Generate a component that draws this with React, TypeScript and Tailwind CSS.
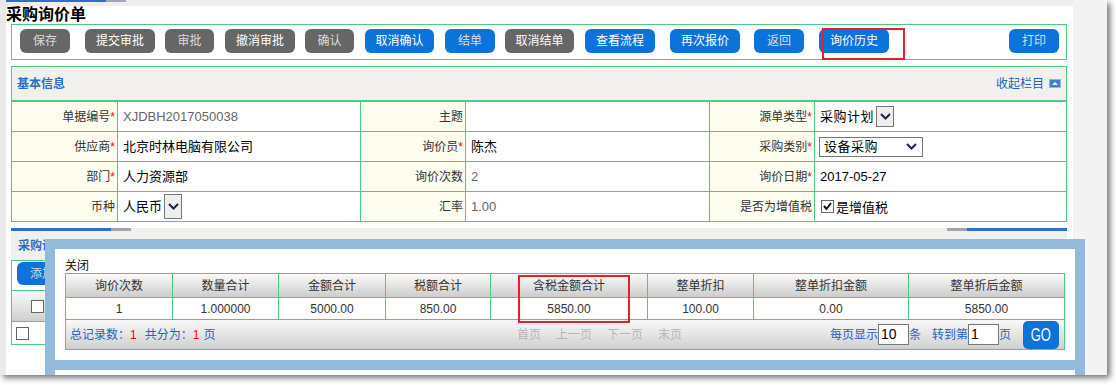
import React from "react";

const G = "border-[#4ccb84]";

function Chevron({ className = "" }: { className?: string }) {
  return (
    <svg width="11" height="7" viewBox="0 0 11 7" className={className}>
      <polyline points="1,1 5.5,5.5 10,1" fill="none" stroke="#1b2450" strokeWidth="2" />
    </svg>
  );
}

function ArrowBox({ h }: { h: string }) {
  return (
    <span className={`ml-[2px] inline-flex w-[18px] ${h} items-center justify-center border border-[#777] bg-[#eeeeee]`}>
      <Chevron />
    </span>
  );
}

function CollapseIcon() {
  return (
    <svg width="12" height="9" viewBox="0 0 12 9">
      <rect x="0" y="0" width="12" height="9" fill="#3f7dd3" />
      <rect x="0.5" y="0.5" width="11" height="8" fill="none" stroke="#8fb4e6" strokeWidth="1" />
      <polygon points="3,6 6,3 9,6" fill="#ffffff" />
    </svg>
  );
}

type B = { label: string; w: string; ml: string; gray?: boolean; dim?: boolean };
const buttons: B[] = [
  { label: "保存", w: "w-[50px]", ml: "ml-0", gray: true, dim: true },
  { label: "提交审批", w: "w-[70px]", ml: "ml-[15px]", gray: true },
  { label: "审批", w: "w-[49px]", ml: "ml-[10px]", gray: true, dim: true },
  { label: "撤消审批", w: "w-[70px]", ml: "ml-[11px]", gray: true },
  { label: "确认", w: "w-[49px]", ml: "ml-[10px]", gray: true, dim: true },
  { label: "取消确认", w: "w-[69px]", ml: "ml-[11px]" },
  { label: "结单", w: "w-[50px]", ml: "ml-[11px]", dim: true },
  { label: "取消结单", w: "w-[69px]", ml: "ml-[10px]", gray: true },
  { label: "查看流程", w: "w-[70px]", ml: "ml-[11px]" },
  { label: "再次报价", w: "w-[70px]", ml: "ml-[15px]" },
  { label: "返回", w: "w-[50px]", ml: "ml-[14px]", dim: true },
  { label: "询价历史", w: "w-[70px]", ml: "ml-[15px]" },
];

function Btn({ b }: { b: B }) {
  return (
    <div
      className={`${b.w} ${b.ml} h-[24px] shrink-0 rounded-[6px] ${b.gray ? "bg-[#666666]" : "bg-[#0b73d9]"} ${
        b.dim ? "text-[#dcdcdc]" : "text-white"
      } flex items-center justify-center text-[12px] leading-none`}
    >
      {b.label}
    </div>
  );
}

function Label({ t, req, last, lastRow }: { t: string; req?: boolean; last?: boolean; lastRow?: boolean }) {
  return (
    <div
      className={`flex items-center justify-end bg-[#fdfdf0] pr-[2px] text-[12px] text-[#333] ${G} ${last ? "" : "border-r"} ${
        lastRow ? "" : "border-b"
      }`}
    >
      {t}
      {req && <span className="text-[#ff0000]">*</span>}
    </div>
  );
}

function Val({ children, last, lastRow, pl = "pl-[5px]" }: { children?: React.ReactNode; last?: boolean; lastRow?: boolean; pl?: string }) {
  return (
    <div className={`flex items-center ${pl} text-[13px] text-black ${G} ${last ? "" : "border-r"} ${lastRow ? "" : "border-b"}`}>
      {children}
    </div>
  );
}

function Checkbox({ checked, className = "" }: { checked?: boolean; className?: string }) {
  return (
    <span className={`inline-flex h-[13px] w-[13px] items-center justify-center border border-[#666] bg-white ${className}`}>
      {checked && (
        <svg width="11" height="11" viewBox="0 0 11 11">
          <polyline points="2,5 4.5,8 9,2" fill="none" stroke="#111" strokeWidth="2" />
        </svg>
      )}
    </span>
  );
}

const mcols = "grid grid-cols-[107px_106px_107px_105px_157px_106px_155px_1fr]";
const heads = ["询价次数", "数量合计", "金额合计", "税额合计", "含税金额合计", "整单折扣", "整单折扣金额", "整单折后金额"];
const vals = ["1", "1.000000", "5000.00", "850.00", "5850.00", "100.00", "0.00", "5850.00"];

export default function App() {
  return (
    <div className="h-[385px] w-[1116px] bg-white font-['Liberation_Sans','Noto_Sans_CJK_SC',sans-serif] text-[12px] text-[#333]">
      <div className="relative flex h-[375px] w-[1107px] overflow-hidden bg-[#f3f3f3] shadow-[3px_3px_6px_rgba(0,0,0,0.55)]">
        <div className="w-[6px] shrink-0 bg-[#e9e9e9]" />
        <div className="flex w-[1067px] shrink-0 flex-col bg-white">
          {/* top band */}
          <div className="flex h-[6px] bg-[#efeeec]">
            <div className="h-[2px] w-[100px] bg-[#2f6fcc]" />
            <div className="h-[2px] w-[20px] bg-[#9ea6b6]" />
          </div>
          <div className="h-[18px] text-[16px] font-bold leading-[18px] text-black">采购询价单</div>

          {/* toolbar */}
          <div className={`ml-[5px] flex h-[36px] w-[1056px] items-start border ${G} pl-[8px] pr-[7px] pt-[4px]`}>
            {buttons.map((b) => (
              <Btn key={b.label} b={b} />
            ))}
            <div className="ml-auto flex h-[24px] w-[50px] shrink-0 items-center justify-center rounded-[6px] bg-[#0b73d9] text-[12px] leading-none text-[#dcdcdc]">
              打印
            </div>
          </div>

          {/* section 1 */}
          <div className={`ml-[5px] mt-[6px] w-[1056px] border ${G}`}>
            <div className={`flex h-[35px] items-center justify-between border-b-2 ${G} bg-[#f2f0ed] pl-[5px] pr-[5px]`}>
              <span className="text-[12px] font-bold text-[#2a6dc9]">基本信息</span>
              <span className="flex items-center gap-[5px] text-[12px] text-[#2060c0]">
                收起栏目
                <CollapseIcon />
              </span>
            </div>
            <div className="grid grid-cols-[106px_243px_105px_244px_105px_1fr] grid-rows-[30px_30px_30px_29px]">
              <Label t="单据编号" req />
              <Val>
                <span className="text-[#666]">XJDBH2017050038</span>
              </Val>
              <Label t="主题" />
              <Val />
              <Label t="源单类型" req />
              <Val last>
                <span className="tracking-[0.5px]">采购计划</span>
                <ArrowBox h="h-[21px]" />
              </Val>

              <Label t="供应商" req />
              <Val>北京时林电脑有限公司</Val>
              <Label t="询价员" req />
              <Val>陈杰</Val>
              <Label t="采购类别" req />
              <Val last pl="pl-[4px]">
                <span className="flex h-[20px] w-[104px] items-center justify-between border border-[#777] bg-white pl-[4px] pr-[5px]">
                  <span className="tracking-[0.5px]">设备采购</span>
                  <Chevron />
                </span>
              </Val>

              <Label t="部门" req />
              <Val>人力资源部</Val>
              <Label t="询价次数" />
              <Val>
                <span className="text-[#666]">2</span>
              </Val>
              <Label t="询价日期" req />
              <Val last>2017-05-27</Val>

              <Label t="币种" lastRow />
              <Val lastRow>
                人民币
                <ArrowBox h="h-[25px]" />
              </Val>
              <Label t="汇率" lastRow />
              <Val lastRow>
                <span className="text-[#666]">1.00</span>
              </Val>
              <Label t="是否为增值税" lastRow />
              <Val last lastRow pl="pl-[6px]">
                <Checkbox checked />
                <span className="ml-[2px] mt-[3px]">是增值税</span>
              </Val>
            </div>
          </div>

          {/* section 2 (mostly covered) */}
          <div className="ml-[5px] mt-[6px] w-[1056px]">
            <div className="relative h-[32px] bg-[#f2f0ed]">
              <div className="flex h-[3px]">
                <div className="w-[100px] bg-[#2f6fcc]" />
                <div className="w-[20px] bg-[#9ea6b6]" />
                <div className="flex-1" />
                <div className="w-[20px] bg-[#9ea6b6]" />
                <div className="w-[100px] bg-[#2f6fcc]" />
              </div>
              <div className="flex h-[29px] items-center justify-between pl-[7px] pr-[5px]">
                <span className="text-[12px] font-bold text-[#2a6dc9]">采购询价单明细</span>
                <span className="flex items-center gap-[5px] text-[12px] text-[#2060c0]">
                  收起栏目
                  <CollapseIcon />
                </span>
              </div>
            </div>
            <div className={`border ${G}`}>
              <div className={`flex h-[30px] items-start border-b ${G} pl-[5px] pt-[1px]`}>
                <div className="flex h-[23px] w-[50px] items-center justify-center rounded-[6px] bg-[#0b73d9] text-[12px] text-[#dcdcdc]">
                  添加
                </div>
              </div>
              <div className="flex h-[30px] items-center bg-gradient-to-b from-[#fafafa] to-[#cfcfcf] pl-[19px]">
                <Checkbox />
              </div>
              <div className={`flex h-[23px] items-center border-t ${G} pl-[4px]`}>
                <Checkbox />
              </div>
            </div>
          </div>
        </div>
        <div className="flex-1 bg-[#f3f3f3]" />

        {/* modal */}
        <div className="absolute left-[45px] top-[239px] flex h-[200px] w-[1040px] flex-col bg-[#94badb] p-[10px]">
          <div className="h-[111px] shrink-0 bg-white pl-[10px] pt-[10px]">
            <div className="h-[14px] text-[12px] leading-[14px] text-[#111]">关闭</div>
            <div className={`w-[1000px] border ${G} text-[12px] text-[#333]`}>
              <div className={`${mcols} h-[24px] border-b ${G} bg-gradient-to-b from-[#fbfbfb] to-[#cdcdcd]`}>
                {heads.map((h, i) => (
                  <div key={h} className={`flex items-center justify-center ${G} ${i < 7 ? "border-r" : ""}`}>
                    {h}
                  </div>
                ))}
              </div>
              <div className={`${mcols} h-[22px] border-b ${G} bg-white`}>
                {vals.map((v, i) => (
                  <div key={i} className={`flex items-center justify-center ${G} ${i < 7 ? "border-r" : ""}`}>
                    {v}
                  </div>
                ))}
              </div>
              <div className="flex h-[29px] items-center bg-gradient-to-b from-[#f9f9f9] to-[#d0d0d0] text-[12px]">
                <div className="w-[451px] shrink-0 pl-[4px] text-[#2363c4]">
                  总记录数：<span className="text-[#ff0000]">1</span>
                  <span className="ml-[8px]">共分为：</span>
                  <span className="text-[#ff0000]">1</span>
                  <span className="ml-[4px]">页</span>
                </div>
                <div className="flex gap-[15px] text-[#b5b5b5]">
                  <span>首页</span>
                  <span>上一页</span>
                  <span>下一页</span>
                  <span>末页</span>
                </div>
                <div className="ml-auto flex items-center pr-[5px] text-[#2363c4]">
                  <span>每页显示</span>
                  <span className="flex h-[21px] w-[31px] items-center border border-[#777] bg-white pl-[2px] text-[14px] text-black">10</span>
                  <span>条</span>
                  <span className="ml-[11px]">转到第</span>
                  <span className="flex h-[21px] w-[31px] items-center border border-[#777] bg-white pl-[2px] text-[14px] text-black">1</span>
                  <span>页</span>
                  <span className="ml-[12px] flex h-[28px] w-[36px] items-center justify-center rounded-[5px] bg-[#0b73d9] text-white">
                    <span className="inline-block scale-x-[0.68] text-[19px] leading-none">GO</span>
                  </span>
                </div>
              </div>
            </div>
          </div>
          <div className="mt-[10px] h-[60px] shrink-0 bg-white" />
        </div>

        {/* red annotation boxes */}
        <div className="absolute left-[822px] top-[28px] h-[32px] w-[83px] border-2 border-[#e2222a]" />
        <div className="absolute left-[518px] top-[275px] h-[48px] w-[112px] border-2 border-[#e2222a]" />
      </div>
    </div>
  );
}
